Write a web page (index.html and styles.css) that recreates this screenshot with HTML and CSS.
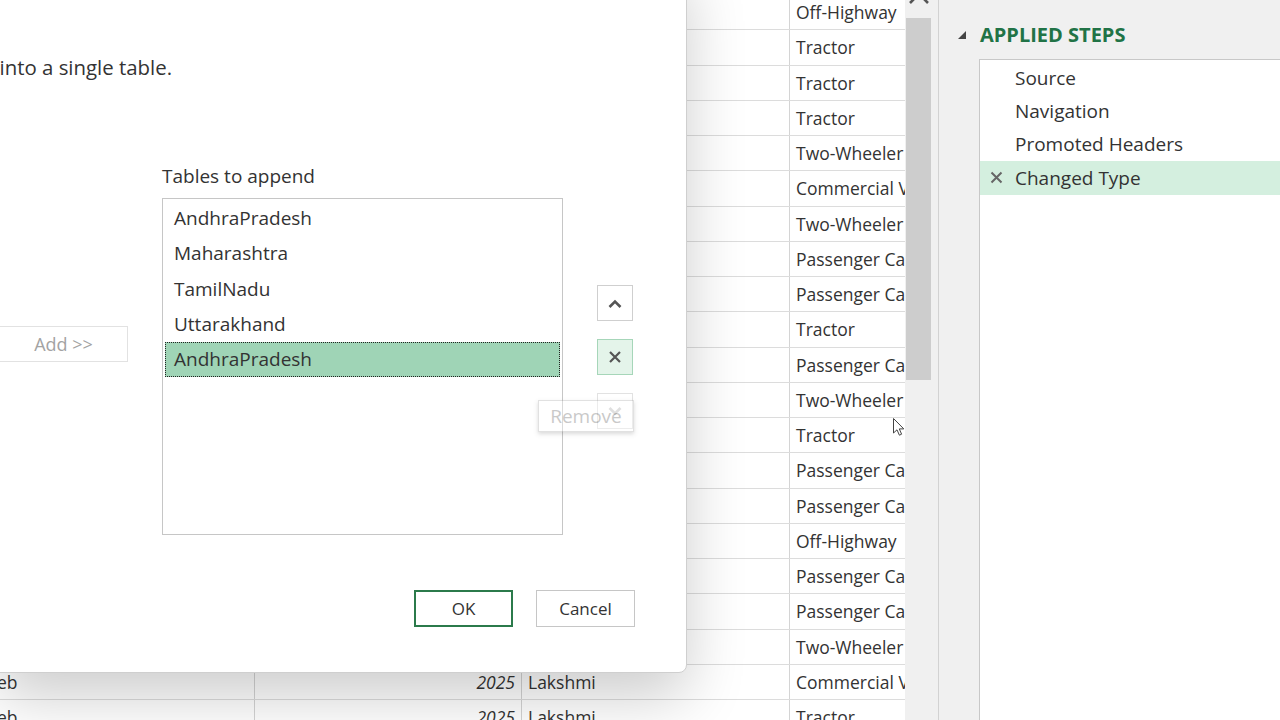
FILE: index.html
```html
<!DOCTYPE html>
<html lang="en">
<head>
  <meta charset="UTF-8" />
  <meta name="viewport" content="width=device-width, initial-scale=1" />
  <title>Append - Power Query Editor</title>
  <link rel="stylesheet" href="styles.css">
</head>
<body>
  <div class="editor">
    <div class="preview">
      <div class="grid-wrap">
        <div class="grid">
          <div class="row"><span>Feb</span><span class="num">2025</span><span>Ravi</span><span>Off-Highway</span></div>
          <div class="row"><span>Feb</span><span class="num">2025</span><span>Suresh</span><span>Tractor</span></div>
          <div class="row"><span>Feb</span><span class="num">2025</span><span>Priya</span><span>Tractor</span></div>
          <div class="row"><span>Feb</span><span class="num">2025</span><span>Anil</span><span>Tractor</span></div>
          <div class="row"><span>Feb</span><span class="num">2025</span><span>Lakshmi</span><span>Two-Wheeler</span></div>
          <div class="row"><span>Feb</span><span class="num">2025</span><span>Ravi</span><span>Commercial Vehicle</span></div>
          <div class="row"><span>Feb</span><span class="num">2025</span><span>Suresh</span><span>Two-Wheeler</span></div>
          <div class="row"><span>Feb</span><span class="num">2025</span><span>Priya</span><span>Passenger Car</span></div>
          <div class="row"><span>Feb</span><span class="num">2025</span><span>Anil</span><span>Passenger Car</span></div>
          <div class="row"><span>Feb</span><span class="num">2025</span><span>Lakshmi</span><span>Tractor</span></div>
          <div class="row"><span>Feb</span><span class="num">2025</span><span>Ravi</span><span>Passenger Car</span></div>
          <div class="row"><span>Feb</span><span class="num">2025</span><span>Suresh</span><span>Two-Wheeler</span></div>
          <div class="row"><span>Feb</span><span class="num">2025</span><span>Priya</span><span>Tractor</span></div>
          <div class="row"><span>Feb</span><span class="num">2025</span><span>Anil</span><span>Passenger Car</span></div>
          <div class="row"><span>Feb</span><span class="num">2025</span><span>Lakshmi</span><span>Passenger Car</span></div>
          <div class="row"><span>Feb</span><span class="num">2025</span><span>Ravi</span><span>Off-Highway</span></div>
          <div class="row"><span>Feb</span><span class="num">2025</span><span>Suresh</span><span>Passenger Car</span></div>
          <div class="row"><span>Feb</span><span class="num">2025</span><span>Priya</span><span>Passenger Car</span></div>
          <div class="row"><span>Feb</span><span class="num">2025</span><span>Anil</span><span>Two-Wheeler</span></div>
          <div class="row"><span>Feb</span><span class="num">2025</span><span>Lakshmi</span><span>Commercial Vehicle</span></div>
          <div class="row"><span>Feb</span><span class="num">2025</span><span>Lakshmi</span><span>Tractor</span></div>
        </div>
      </div>
      <div class="scrollbar">
        <svg class="scroll-up" width="22" height="14" viewBox="0 0 22 14"><path d="M2 12 L11 3 L20 12" fill="none" stroke="#555" stroke-width="2.6"/></svg>
        <div class="thumb"></div>
      </div>
    </div>

    <aside class="steps-pane">
      <div class="steps-title">
        <svg width="8" height="8" viewBox="0 0 8 8"><polygon points="8,0 8,8 0,8" fill="#444"/></svg>
        APPLIED STEPS
      </div>
      <ul class="steps">
        <li><span class="step-icon"></span>Source</li>
        <li><span class="step-icon"></span>Navigation</li>
        <li><span class="step-icon"></span>Promoted Headers</li>
        <li class="current">
          <span class="step-icon"><svg width="13" height="13" viewBox="0 0 13 13"><path d="M1.5 1.5 L11.5 11.5 M11.5 1.5 L1.5 11.5" stroke="#666" stroke-width="2"/></svg></span>Changed Type
        </li>
      </ul>
    </aside>
  </div>

  <div class="dialog">
    <p class="intro"><span>Concatenate rows from two tables into a single table.</span></p>

    <div class="append-area">
      <div class="add-col">
        <button class="btn add" disabled>Add &gt;&gt;</button>
      </div>

      <div class="append-col">
        <label>Tables to append</label>
        <ul class="table-list">
          <li>AndhraPradesh</li>
          <li>Maharashtra</li>
          <li>TamilNadu</li>
          <li>Uttarakhand</li>
          <li class="selected">AndhraPradesh</li>
        </ul>
      </div>

      <div class="order-col">
        <button class="icon-btn" title="Move up">
          <svg width="14" height="9" viewBox="0 0 14 9"><path d="M1.5 8 L7 2.5 L12.5 8" fill="none" stroke="#555" stroke-width="2.6"/></svg>
        </button>
        <button class="icon-btn remove" title="Remove">
          <svg width="14" height="14" viewBox="0 0 14 14"><path d="M2 2 L12 12 M12 2 L2 12" stroke="#555" stroke-width="2.2"/></svg>
        </button>
        <button class="icon-btn" disabled>
          <svg width="14" height="9" viewBox="0 0 14 9"><path d="M1.5 1 L7 6.5 L12.5 1" fill="none" stroke="#cfcfcf" stroke-width="2.6"/></svg>
        </button>
        <div class="tooltip">Remove</div>
      </div>
    </div>

    <div class="dialog-footer">
      <button class="btn primary">OK</button>
      <button class="btn">Cancel</button>
    </div>
  </div>

  <svg class="cursor" width="12" height="19" viewBox="0 0 12 19"><path d="M0.5 0.5 L0.5 15 L4 11.8 L6.4 17.2 L8.6 16.2 L6.3 10.9 L10.8 10.9 Z" fill="#fff" stroke="#444" stroke-width="1"/></svg>
</body>
</html>
```

FILE: styles.css
```css
* {
  box-sizing: border-box;
}

html, body {
  margin: 0;
}

body {
  position: relative;
  width: 1280px;
  height: 720px;
  overflow: hidden;
  font-family: "Open Sans", "Noto Sans", Arial, sans-serif;
  color: #333;
  background: #fff;
}

/* editor behind the dialog */
.editor {
  display: flex;
  height: 720px;
}

.preview {
  display: flex;
  flex: none;
}

.grid-wrap {
  width: 905px;
  height: 720px;
  overflow: hidden;
  background: #fff;
}

.grid {
  margin: -5px 0 0 -18px;
  font-size: 17.5px;
}

.row {
  display: grid;
  grid-template-columns: 272px 267px 268px 116px;
  height: 35.25px;
  border-bottom: 1px solid #dcdcdc;
}

.row span {
  padding: 0 6px;
  line-height: 35px;
  white-space: nowrap;
  overflow: hidden;
}

.row span + span {
  border-left: 1px solid #d4d4d4;
}

.row .num {
  text-align: right;
  font-style: italic;
}

.scrollbar {
  width: 34px;
  background: #f0f0f0;
  border-right: 1px solid #d2d2d2;
}

.scroll-up {
  display: block;
  margin: -9px 0 0 3px;
}

.thumb {
  width: 25px;
  height: 362px;
  margin: 13px 0 0 1px;
  background: #cdcdcd;
}

.steps-pane {
  display: flex;
  flex-direction: column;
  flex: 1;
  background: #f0f0f0;
  padding: 23px 0 0 19px;
}

.steps-title {
  display: flex;
  align-items: center;
  gap: 14px;
  font-size: 20px;
  line-height: 24px;
  font-weight: 700;
  color: #217346;
}

.steps {
  flex: 1;
  list-style: none;
  margin: 12px 0 0 21px;
  padding: 1px 0 0;
  background: #fff;
  border: 1px solid #c8c8c8;
  border-right: none;
  border-bottom: none;
}

.steps li {
  display: flex;
  align-items: center;
  height: 33.4px;
  padding-left: 10px;
  font-size: 19px;
}

.steps li.current {
  background: #d4efdf;
}

.step-icon {
  display: flex;
  width: 13px;
  margin-right: 12px;
}

/* append dialog */
.dialog {
  position: absolute;
  left: -2px;
  top: -40px;
  width: 689px;
  height: 713px;
  background: #fff;
  border: 1px solid #cfcfcf;
  border-radius: 0 0 8px 0;
  box-shadow: 0 24px 60px rgba(0,0,0,0.2);
  font-size: 19px;
}

.intro {
  display: flex;
  justify-content: flex-end;
  width: 173px;
  margin: 94px 0 0;
  font-size: 20.4px;
  line-height: 24px;
  white-space: nowrap;
}

.append-area {
  display: flex;
  margin-top: 85px;
}

.add-col {
  width: 129px;
  padding-top: 162px;
}

.btn {
  width: 99px;
  height: 37px;
  padding: 0;
  font-family: inherit;
  font-size: 17px;
  color: #333;
  background: #fff;
  border: 1px solid #c6c6c6;
}

.btn.primary {
  border: 2px solid #2b7a4b;
}

.btn.add {
  width: 129px;
  height: 36px;
  font-size: 18px;
  color: #a3a3a3;
  border-color: #e2e2e2;
}

.append-col {
  margin-left: 34px;
}

.append-col label {
  display: block;
  line-height: 24px;
}

.table-list {
  list-style: none;
  width: 401px;
  height: 337px;
  margin: 10px 0 0;
  padding: 2px 2px 0;
  border: 1px solid #c6c6c6;
}

.table-list li {
  height: 35.3px;
  line-height: 33.3px;
  padding-left: 8px;
  border: 1px solid transparent;
}

.table-list li.selected {
  background: #9fd4b6;
  border: 1px dotted #222;
}

.order-col {
  position: relative;
  display: flex;
  flex-direction: column;
  gap: 18px;
  margin-left: 34px;
  padding-top: 121px;
}

.icon-btn {
  display: flex;
  align-items: center;
  justify-content: center;
  width: 36px;
  height: 36px;
  padding: 0;
  background: #fff;
  border: 1px solid #cfcfcf;
}

.icon-btn.remove {
  background: #e4f4ea;
  border-color: #a6d6b9;
}

.icon-btn:disabled {
  border-color: #e2e2e2;
}

.tooltip {
  position: absolute;
  left: -59px;
  top: 236px;
  width: 96px;
  height: 32px;
  line-height: 30px;
  text-align: center;
  font-size: 19px;
  color: #666;
  background: #fff;
  border: 1px solid #aaa;
  box-shadow: 0 2px 4px rgba(0,0,0,0.4);
  opacity: 0.35;
}

.dialog-footer {
  display: flex;
  justify-content: flex-end;
  gap: 23px;
  margin-top: 55px;
  padding-right: 51px;
}

.cursor {
  position: absolute;
  left: 893px;
  top: 418px;
}
```
